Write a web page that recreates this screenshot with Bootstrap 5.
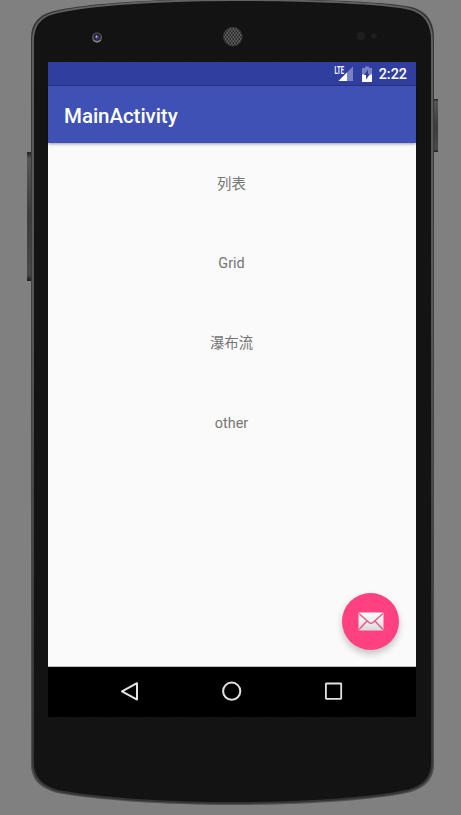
<!DOCTYPE html>
<html lang="zh">
<head>
<meta charset="utf-8">
<meta name="viewport" content="width=device-width, initial-scale=1">
<title>MainActivity</title>
<link href="https://cdn.jsdelivr.net/npm/bootstrap@5.3.0/dist/css/bootstrap.min.css" rel="stylesheet">
<style>
  body { background: #808080; font-family: Roboto, "Noto Sans CJK SC", sans-serif; }
  .device { width: 461px; height: 815px; padding: 62px 45px 98px 48px; }
  .device-shell { z-index: 0; }
  .screen { z-index: 1; background: #fafafa; }
  .status-bar { height: 24px; background: #303f9f; color: #fff; padding-right: 9px; box-shadow: inset 0 -1px #2b3788; }
  .clock { font-size: 14.4px; font-weight: 500; line-height: 24px; margin-left: 7px; padding-top: 2px; }
  .app-bar { height: 57px; background: #3f51b5; padding: 2px 16px 0; box-shadow: 0 1px 3px rgba(0,0,0,.38); z-index: 1; }
  .app-title { font-size: 20.5px; font-weight: 500; color: #fff; line-height: 24px; letter-spacing: -.05px; }
  .menu-item { height: 80px; padding-top: 3px; font-size: 14.4px; color: #757575; background: transparent; }
  .menu-item + .menu-item { padding-top: 2px; }
  .menu-list { padding-right: 1px; }
  .fab { right: 17px; bottom: 17px; width: 57px; height: 57px; background: #ff4081; box-shadow: 0 4px 7px rgba(0,0,0,.22); }
  .nav-keys { height: 50px; background: #000; padding: 0 72px; box-shadow: 0 -1px #bdbdbd; }
</style>
</head>
<body class="overflow-hidden">
<div class="device position-relative">
  <svg class="device-shell position-absolute top-0 start-0" width="461" height="815" viewBox="0 0 461 815" aria-hidden="true">
    <defs>
      <pattern id="grain" width="11" height="9" patternUnits="userSpaceOnUse">
        <path d="M1 1h1v1h-1zM6 3h1v1h-1zM3 6h1v1h-1zM9 7h1v1h-1z" fill="#191919"/>
      </pattern>
      <pattern id="mesh" width="3" height="4" patternUnits="userSpaceOnUse">
        <rect width="3" height="4" fill="#5c5c5c"/><circle cx=".8" cy="1" r=".85" fill="#111"/><circle cx="2.3" cy="3" r=".85" fill="#111"/>
      </pattern>
      <linearGradient id="key" x1="0" x2="0" y1="0" y2="1">
        <stop offset="0" stop-color="#222"/><stop offset=".05" stop-color="#555"/><stop offset=".5" stop-color="#3c3c3c"/><stop offset=".95" stop-color="#484848"/><stop offset="1" stop-color="#1c1c1c"/>
      </linearGradient>
      <linearGradient id="rim" x1="0" x2="0" y1="0" y2="1">
        <stop offset="0" stop-color="#626262"/><stop offset=".4" stop-color="#5a5b5e"/><stop offset=".8" stop-color="#3c3c3c"/><stop offset="1" stop-color="#343434"/>
      </linearGradient>
      <linearGradient id="edge" x1="0" x2="0" y1="0" y2="1">
        <stop offset="0" stop-color="#363636"/><stop offset=".5" stop-color="#404040"/><stop offset="1" stop-color="#505050"/>
      </linearGradient>
    </defs>
    <rect x="27" y="152" width="5" height="129" fill="url(#key)"/>
    <rect x="433" y="99" width="5" height="53" fill="url(#key)"/>
    <path d="M31 38C31 24 38 15.500 52 11.500C80 4 150-1 232-1S385 1.500 411 7C427 11 434 22 434 38V764C434 780 424 788.500 409 792.500C370 801 300 805 232 805S95 800 57 793C40 788 31 780 31 764Z" fill="url(#edge)"/>
    <path d="M33 41C33 26 40 17 53 13.500C81 6 150 0 232 0S384 3.500 410 9C425 13 432 24 432 41V763C432 778 423 786.500 408 790.500C370 799 300 803 232 803S95 798 58 791C42 786.500 33 778 33 763Z" fill="#141414" stroke="url(#rim)" stroke-width="1.800"/>
    <path id="face" d="M35 44C35 28 42 19 54 16C81 9 150 2 232 2S383 5 408 11C423 15 430 26 430 44V760C430 776 422 784 407 788C370 797 300 801 232 801S95 796 59 789C44 784 35 776 35 760Z" fill="#131313"/>
    <use href="#face" fill="none"/>
    <path d="M35 44C35 28 42 19 54 16C81 9 150 2 232 2S383 5 408 11C423 15 430 26 430 44V760C430 776 422 784 407 788C370 797 300 801 232 801S95 796 59 789C44 784 35 776 35 760Z" fill="url(#grain)"/>
    <circle cx="97" cy="37.500" r="5" fill="#555"/>
    <path d="M93 40a5 5 0 0 0 8 0" stroke="#999" fill="none"/>
    <circle cx="97" cy="37" r="3.400" fill="#22222c"/><circle cx="97" cy="37.500" r="2" fill="#3d3a98"/><circle cx="96.500" cy="36.500" r=".9" fill="#ccc"/>
    <circle cx="232.800" cy="36.600" r="9.300" fill="url(#mesh)" stroke="#3c3c3c" stroke-width=".8"/>
    <circle cx="361" cy="36" r="4" fill="#1f1f1f"/><circle cx="374" cy="36" r="2.700" fill="#1f1f1f"/>
  </svg>

  <main class="screen position-relative d-flex flex-column h-100">
    <div class="status-bar d-flex align-items-center justify-content-end">
      <svg width="20" height="18" viewBox="0 0 20 18" aria-label="LTE">
        <path d="M19 1.500V16H4.500Z" fill="#7983c2"/><path d="M13 7.500V16H4.500Z" fill="#fff"/>
        <path d="M0 0H10.500V8.500L9 10H0Z" fill="#303f9f"/>
        <text x=".5" y="8.500" font-size="10" font-weight="700" fill="#fff" textLength="9.500" lengthAdjust="spacingAndGlyphs">LTE</text>
      </svg>
      <svg class="ms-2" width="10" height="18" viewBox="0 0 10 18" aria-hidden="true">
        <path d="M3 1.500H7V3H10V10H0V3H3Z" fill="#7983c2"/><path d="M0 9.500H10V17H0Z" fill="#fff"/>
        <path d="M6 4.500V9H8L4 14.500V10H2Z" fill="#303f9f"/>
      </svg>
      <span class="clock">2:22</span>
    </div>
    <header class="app-bar d-flex align-items-center position-relative">
      <h1 class="app-title mb-0">MainActivity</h1>
    </header>
    <section class="position-relative flex-grow-1">
      <div class="menu-list list-group list-group-flush text-center">
        <div class="menu-item d-flex align-items-center justify-content-center">列表</div>
        <div class="menu-item d-flex align-items-center justify-content-center">Grid</div>
        <div class="menu-item d-flex align-items-center justify-content-center">瀑布流</div>
        <div class="menu-item d-flex align-items-center justify-content-center">other</div>
      </div>
      <button class="fab position-absolute border-0 rounded-circle p-0 d-flex align-items-center justify-content-center" aria-label="Email">
        <svg width="26" height="19" viewBox="0 0 26 19">
          <defs><linearGradient id="paper" x1="0" x2="0" y1="0" y2="1"><stop offset="0" stop-color="#fff"/><stop offset="1" stop-color="#d9d9d9"/></linearGradient></defs>
          <rect x=".5" y=".5" width="25" height="18" rx="1" fill="url(#paper)"/>
          <path d="M1 1.500L11 10.500Q13 12 15 10.500L25 1.500M1 17.500L9 9M25 17.500L17 9" fill="none" stroke="#e65a87" stroke-width="1.500"/>
        </svg>
      </button>
    </section>
    <nav class="nav-keys d-flex align-items-center justify-content-between position-relative">
      <svg width="20" height="20" viewBox="0 0 20 20" fill="none" stroke="#e6e1e3" stroke-width="2" stroke-linejoin="round"><path d="M17 1.200V17.600L2 9.400Z"/></svg>
      <svg class="overflow-visible" width="20" height="20" viewBox="0 0 20 20" fill="none" stroke="#e6e1e3" stroke-width="2"><circle cx="9.700" cy="9.200" r="8.600"/></svg>
      <svg width="20" height="20" viewBox="0 0 20 20" fill="none" stroke="#e6e1e3" stroke-width="1.800"><rect x="1.900" y="1.500" width="15.300" height="15.300" rx=".5"/></svg>
    </nav>
  </main>
</div>
<script src="https://cdn.jsdelivr.net/npm/bootstrap@5.3.0/dist/js/bootstrap.bundle.min.js"></script>
</body>
</html>
